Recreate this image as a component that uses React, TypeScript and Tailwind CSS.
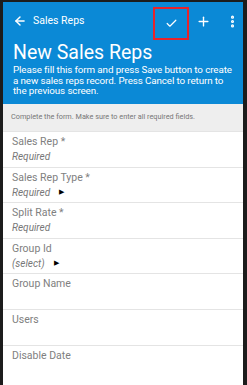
import { ArrowLeft, Check, Plus, EllipsisVertical } from "lucide-react";

const fields = [
  { label: "Sales Rep *", value: "Required", arrow: false },
  { label: "Sales Rep Type *", value: "Required", arrow: true },
  { label: "Split Rate *", value: "Required", arrow: false },
  { label: "Group Id", value: "(select)", arrow: true },
  { label: "Group Name", value: "", arrow: false },
  { label: "Users", value: "", arrow: false },
  { label: "Disable Date", value: "", arrow: false },
];

export default function App() {
  return (
    <div className="h-[385px] w-[247px] overflow-hidden bg-[#1c1c1c] pl-[3px] pr-[4px] pt-[2px] font-['Roboto',sans-serif]">
      <div className="flex h-full flex-col bg-white">
        {/* Header */}
        <header className="h-[102px] bg-[#0b89d6] text-white">
          <div className="flex h-[38px] items-center">
            <ArrowLeft className="ml-[10px] h-[14px] w-[14px]" strokeWidth={2.5} />
            <span className="ml-[6px] text-[10.5px]">Sales Reps</span>
            <div className="ml-auto mt-[5px] flex h-[33px] w-[36px] items-center justify-center border-2 border-[#e8232a]">
              <Check className="h-[13px] w-[13px]" strokeWidth={2.2} />
            </div>
            <Plus className="ml-[7px] h-[15px] w-[15px]" strokeWidth={2.2} />
            <EllipsisVertical className="ml-[14px] mr-[3px] h-[15px] w-[15px]" strokeWidth={3} />
          </div>
          <h1 className="mt-[1px] pl-[10px] text-[19.5px] leading-[24px]">New Sales Reps</h1>
          <p className="whitespace-nowrap pl-[10px] text-[9.8px] leading-[10.5px] tracking-[-0.1px]">
            Please fill this form and press Save button to create
            <br />
            a new sales reps record. Press Cancel to return to
            <br />
            the previous screen.
          </p>
        </header>

        {/* Notice */}
        <div className="flex h-[27px] items-center bg-[#eeeeee] pl-[8px] text-[7.3px] text-[#777]">
          Complete the form. Make sure to enter all required fields.
        </div>

        {/* Fields */}
        {fields.map((f) => (
          <div key={f.label} className="h-[35.6px] border-t border-[#e4e4e4] pl-[9px] pt-[3px]">
            <div className="text-[10.5px] leading-[14px] text-[#808080]">{f.label}</div>
            <div className="flex items-center text-[10px] italic leading-[15px] text-[#777]">
              {f.value}
              {f.arrow && <span className="ml-[9px] text-[7px] not-italic text-black">▶</span>}
            </div>
          </div>
        ))}
      </div>
    </div>
  );
}
